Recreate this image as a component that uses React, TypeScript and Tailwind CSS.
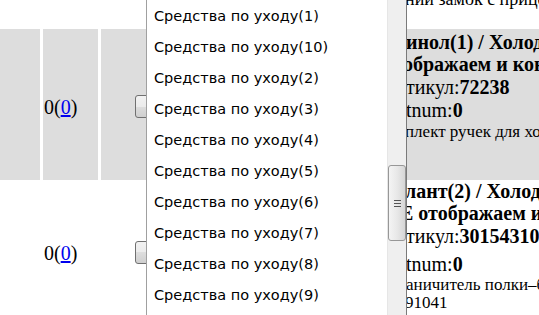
import React from "react";

const items = [
  "Средства для мытья",
  "Средства по уходу(1)",
  "Средства по уходу(10)",
  "Средства по уходу(2)",
  "Средства по уходу(3)",
  "Средства по уходу(4)",
  "Средства по уходу(5)",
  "Средства по уходу(6)",
  "Средства по уходу(7)",
  "Средства по уходу(8)",
  "Средства по уходу(9)",
  "Средства по уходу(11)",
];

function Counter() {
  return (
    <span className="text-[20px] leading-[22px]">
      0(<a href="#" className="text-[#0000ee] underline">0</a>)
    </span>
  );
}

function Btn() {
  return (
    <div className="ml-[34px] h-[23px] w-[60px] rounded-[3px] border border-[#707070] bg-[linear-gradient(to_bottom,#f2f2f2_0%,#ebebeb_50%,#dddddd_50%,#cfcfcf_100%)]" />
  );
}

export default function App() {
  return (
    <div className="relative h-[315px] w-[539px] overflow-hidden bg-white font-['Liberation_Serif',serif] text-black">
      <div className="grid grid-cols-[40px_55px_303px_132px] grid-rows-[29px_151px_144px] gap-x-[3px]">
        {/* row 0 */}
        <div />
        <div />
        <div />
        <div className="overflow-hidden">
          <div className="-mt-[11px] -ml-[2px] whitespace-nowrap text-[18px] leading-[21px]">
            ний замок с прицепом
          </div>
        </div>
        {/* row 1 */}
        <div className="bg-[#dddddd]" />
        <div className="flex items-center bg-[#dddddd] pl-[1px] pt-[4px]">
          <Counter />
        </div>
        <div className="flex items-center bg-[#dddddd] pt-[3px]">
          <Btn />
        </div>
        <div className="overflow-hidden bg-[#dddddd] pt-[2px]">
          <div className="-ml-[1px] whitespace-nowrap text-[20px] font-bold leading-[22px]">инол(1) / Холодильники</div>
          <div className="-ml-[4px] whitespace-nowrap text-[20px] font-bold leading-[23px]">ображаем и конфигурация</div>
          <div className="-ml-[1px] whitespace-nowrap text-[20px] leading-[23px]">
            тикул:<b>72238</b>
          </div>
          <div className="-ml-[1px] whitespace-nowrap text-[20px] leading-[23px]">
            tnum:<b>0</b>
          </div>
          <div className="-ml-[2px] whitespace-nowrap text-[17px] leading-[20px]">плект ручек для холодильника</div>
        </div>
        {/* row 2 */}
        <div />
        <div className="flex items-center pl-[1px] pt-[1px]">
          <Counter />
        </div>
        <div className="flex items-center">
          <Btn />
        </div>
        <div className="overflow-hidden">
          <div className="-ml-[2px] whitespace-nowrap text-[20px] font-bold leading-[22px]">лант(2) / Холодильники</div>
          <div className="-ml-[7px] whitespace-nowrap text-[20px] font-bold leading-[23px]">Е отображаем и конфигурация</div>
          <div className="-ml-[1px] whitespace-nowrap text-[20px] leading-[23px]">
            тикул:<b>30154310</b>
          </div>
          <div className="mt-[5px] -ml-[1px] whitespace-nowrap text-[20px] leading-[23px]">
            tnum:<b>0</b>
          </div>
          <div className="-ml-[1px] whitespace-nowrap text-[17px] leading-[18px]">аничитель полки–балкона</div>
          <div className="-ml-[2px] whitespace-nowrap text-[17px] leading-[18px]">91041</div>
        </div>
      </div>

      {/* open dropdown list */}
      <div className="absolute left-[146px] top-[-30px] flex h-[400px] w-[261px] border-l border-r border-l-[#a0a0a0] border-r-[#7a7a7a] bg-white">
        <div className="flex-1 font-['DejaVu_Sans',sans-serif] text-[14.5px] text-black">
          {items.map((t) => (
            <div key={t} className="flex h-[31px] items-center whitespace-nowrap pl-[7px]">
              {t}
            </div>
          ))}
        </div>
        <div className="w-[19px] border-l border-l-[#e6e6e6] bg-[#efefef]">
          <div className="mt-[195px] flex h-[76px] w-[18px] flex-col items-center justify-center gap-[2px] rounded-[3px] border border-[#979797] bg-[linear-gradient(to_right,#f4f4f4,#e8e8e8_50%,#d6d6d6)]">
            <div className="h-[1px] w-[7px] bg-[#555]" />
            <div className="h-[1px] w-[7px] bg-[#555]" />
            <div className="h-[1px] w-[7px] bg-[#555]" />
          </div>
        </div>
      </div>
    </div>
  );
}
